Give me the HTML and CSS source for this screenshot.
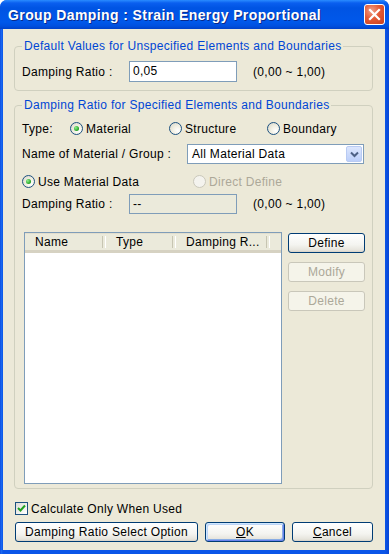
FILE: index.html
```html
<!DOCTYPE html>
<html>
  <head>
    <title>Group Damping : Strain Energy Proportional</title>
    <link rel="stylesheet" href="styles.css">
  </head>
  <body>
    <div class="window">
      <div class="title-bar">
        <span class="title">Group Damping : Strain Energy Proportional</span>
        <span class="close-btn">
          <svg width="13" height="13" viewBox="0 0 13 13">
            <path d="M2 2 L11 11 M11 2 L2 11" stroke="#fff" stroke-width="2.2" stroke-linecap="square" fill="none"/>
          </svg>
        </span>
      </div>

      <div class="client">
        <!-- defaults group -->
        <fieldset class="group group-default">
          <legend>Default Values for Unspecified Elements and Boundaries</legend>
          <div class="row field-row">
            <span class="field-lbl">Damping Ratio :</span>
            <span class="text-box">0,05</span>
            <span class="range">(0,00 ~ 1,00)</span>
          </div>
        </fieldset>

        <!-- specified group -->
        <fieldset class="group group-specified">
          <legend>Damping Ratio for Specified Elements and Boundaries</legend>

          <div class="row type-row">
            <span class="type-lbl">Type:</span>
            <span class="opt opt-material"><span class="radio checked"></span>Material</span>
            <span class="opt opt-structure"><span class="radio"></span>Structure</span>
            <span class="opt"><span class="radio"></span>Boundary</span>
          </div>

          <div class="row name-row">
            <span class="name-lbl">Name of Material / Group :</span>
            <span class="select">
              <span class="select-text">All Material Data</span>
              <span class="select-arrow">
                <svg width="9" height="7" viewBox="0 0 9 7">
                  <path d="M1 1.5 L4.5 5 L8 1.5" stroke="#4d6185" stroke-width="2" fill="none"/>
                </svg>
              </span>
            </span>
          </div>

          <div class="row source-row">
            <span class="opt opt-use"><span class="radio checked"></span>Use Material Data</span>
            <span class="opt disabled"><span class="radio"></span>Direct Define</span>
          </div>

          <div class="row field-row ratio-row">
            <span class="field-lbl">Damping Ratio :</span>
            <span class="text-box readonly">--</span>
            <span class="range">(0,00 ~ 1,00)</span>
          </div>

          <div class="list-area">
            <div class="list-view">
              <div class="list-header">
                <span class="col col-name">Name</span>
                <span class="col col-type">Type</span>
                <span class="col col-ratio">Damping R...</span>
              </div>
            </div>
            <div class="side-buttons">
              <span class="btn">Define</span>
              <span class="btn disabled">Modify</span>
              <span class="btn disabled">Delete</span>
            </div>
          </div>
        </fieldset>

        <div class="row check-row">
          <span class="checkbox">
            <svg width="9" height="9" viewBox="0 0 9 9">
              <path d="M1 4 L3.5 6.5 L8 1.5" stroke="#21a121" stroke-width="2" fill="none"/>
            </svg>
          </span>
          Calculate Only When Used
        </div>

        <div class="row bottom-buttons">
          <span class="btn btn-option">Damping Ratio Select Option</span>
          <span class="btn btn-ok"><u>O</u>K</span>
          <span class="btn btn-cancel"><u>C</u>ancel</span>
        </div>
      </div>
    </div>
  </body>
</html>
```

FILE: styles.css
```css
* {
  box-sizing: border-box;
}

body {
  margin: 0;
  font-family: "Liberation Sans", Arial, sans-serif;
  font-size: 12px;
  letter-spacing: 0.3px;
  color: #000;
  background: #fff;
}

/* window frame */
.window {
  width: 389px;
  height: 554px;
  display: flex;
  flex-direction: column;
  background: linear-gradient(to right, #0a3fd8 0, #1b6cf2 1px, #0a55e8 3px, #0a55e8 385px, #0846d4 389px);
  border-radius: 7px 7px 0 0;
  overflow: hidden;
}

.title-bar {
  height: 29px;
  flex-shrink: 0;
  display: flex;
  align-items: center;
  padding-left: 8px;
  background: linear-gradient(to bottom, #2a8cff 0, #0a5fef 3px, #0054e3 8px, #0058ea 22px, #0050df 26px, #0041c8 29px);
}

.title {
  color: #fff;
  font-weight: bold;
  font-size: 14px;
  letter-spacing: 0.4px;
  text-shadow: 1px 1px #0a2a8a;
}

.close-btn {
  margin-left: auto;
  margin-right: 4px;
  width: 21px;
  height: 21px;
  display: flex;
  align-items: center;
  justify-content: center;
  border: 1px solid #fff;
  border-radius: 3px;
  background: radial-gradient(circle at 35% 30%, #f0a08a 0, #e45a35 45%, #c8401e 100%);
}

/* client area */
.client {
  flex: 1;
  margin: 0 4px 4px 3px;
  background: #ece9d8;
  padding: 10px 12px 0 11px;
  display: flex;
  flex-direction: column;
}

.group {
  margin: 0;
  padding: 7px 7px 8px;
  border: 1px solid #d0d0bf;
  border-radius: 4px;
  min-width: 0;
}

.group legend {
  padding: 0 2px;
  line-height: 15px;
  color: #0046d5;
}

.group-specified {
  margin-top: 7px;
  padding-top: 8px;
  padding-bottom: 4px;
}

.row {
  display: flex;
  align-items: center;
}

.field-row {
  height: 21px;
}

.field-lbl {
  width: 107px;
}

.text-box {
  width: 108px;
  height: 21px;
  border: 1px solid #7f9db9;
  background: #fff;
  padding: 0 3px;
  line-height: 19px;
}

.text-box.readonly {
  height: 20px;
  line-height: 18px;
  background: #ebeadb;
}

.range {
  margin-left: 16px;
}

/* radio buttons */
.opt {
  display: flex;
  align-items: center;
}

.radio {
  width: 13px;
  height: 13px;
  margin-right: 3px;
  border: 1px solid #1c5180;
  border-radius: 50%;
  background: radial-gradient(circle at 70% 70%, #fff 0, #f1efe2 45%, #d4d3c8 100%);
  display: flex;
  align-items: center;
  justify-content: center;
}

.radio.checked::after {
  content: "";
  width: 5px;
  height: 5px;
  border-radius: 50%;
  background: radial-gradient(circle at 35% 35%, #8ef08e 0, #21a121 70%);
}

.opt.disabled {
  color: #aca899;
}

.opt.disabled .radio {
  border-color: #cac8bb;
  background: #f4f3ee;
}

.type-row {
  height: 15px;
}

.type-lbl {
  width: 48px;
}

.opt-material {
  width: 99px;
}

.opt-structure {
  width: 98px;
}

.name-row {
  height: 20px;
  margin-top: 8px;
}

.name-lbl {
  width: 165px;
}

.select {
  width: 177px;
  height: 20px;
  border: 1px solid #7f9db9;
  background: #fff;
  display: flex;
  align-items: center;
  padding: 1px;
}

.select-text {
  flex: 1;
  padding-left: 3px;
}

.select-arrow {
  width: 16px;
  height: 16px;
  border: 1px solid #b9cbf3;
  border-radius: 2px;
  background: linear-gradient(to bottom, #dce6fd, #bccffa);
  display: flex;
  align-items: center;
  justify-content: center;
}

.source-row {
  height: 15px;
  margin-top: 10px;
}

.opt-use {
  width: 171px;
}

.ratio-row {
  height: 20px;
  margin-top: 5px;
}

/* list view and side buttons */
.list-area {
  display: flex;
  margin-top: 18px;
  padding-left: 2px;
}

.list-view {
  width: 258px;
  height: 252px;
  border: 1px solid #7f9db9;
  background: #fff;
}

.list-header {
  height: 20px;
  display: flex;
  background: #ebeadb;
  border-bottom: 3px solid #d6d2c2;
  box-shadow: 0 1px 0 #e2decd inset;
}

.col {
  display: flex;
  align-items: center;
  padding-left: 10px;
  position: relative;
}

.col::after {
  content: "";
  position: absolute;
  right: 0;
  top: 3px;
  bottom: 2px;
  width: 2px;
  border-left: 1px solid #c7c5b2;
  border-right: 1px solid #fff;
}

.col-name {
  width: 81px;
}

.col-type {
  width: 70px;
}

.col-ratio {
  width: 94px;
}

.side-buttons {
  margin-left: 6px;
  display: flex;
  flex-direction: column;
  gap: 9px;
  padding-top: 1px;
}

.btn {
  width: 77px;
  height: 20px;
  display: flex;
  align-items: center;
  justify-content: center;
  border: 1px solid #003c74;
  border-radius: 3px;
  background: linear-gradient(to bottom, #fff 0, #f4f4f0 60%, #e6e4dc 90%, #d6d0c5 100%);
}

.btn.disabled {
  border-color: #c9c7ba;
  background: #f5f4ea;
  color: #aca899;
}

.btn u {
  text-decoration-thickness: 1px;
}

/* bottom */
.check-row {
  height: 15px;
  margin-top: 12px;
  margin-left: 1px;
}

.checkbox {
  width: 13px;
  height: 13px;
  margin-right: 3px;
  border: 1px solid #1c5180;
  background: linear-gradient(135deg, #dcdcd7, #fff);
  display: flex;
  align-items: center;
  justify-content: center;
}

.bottom-buttons {
  margin-top: 6px;
  margin-left: 1px;
}

.btn-option {
  width: 183px;
}

.btn-ok {
  width: 80px;
  margin-left: 7px;
  box-shadow: inset 1px 1px #cee7ff, inset -1px -1px #6982ee, inset 2px 2px #bcd4f6, inset -2px -2px #89ade4;
}

.btn-cancel {
  width: 81px;
  margin-left: 7px;
}
```
